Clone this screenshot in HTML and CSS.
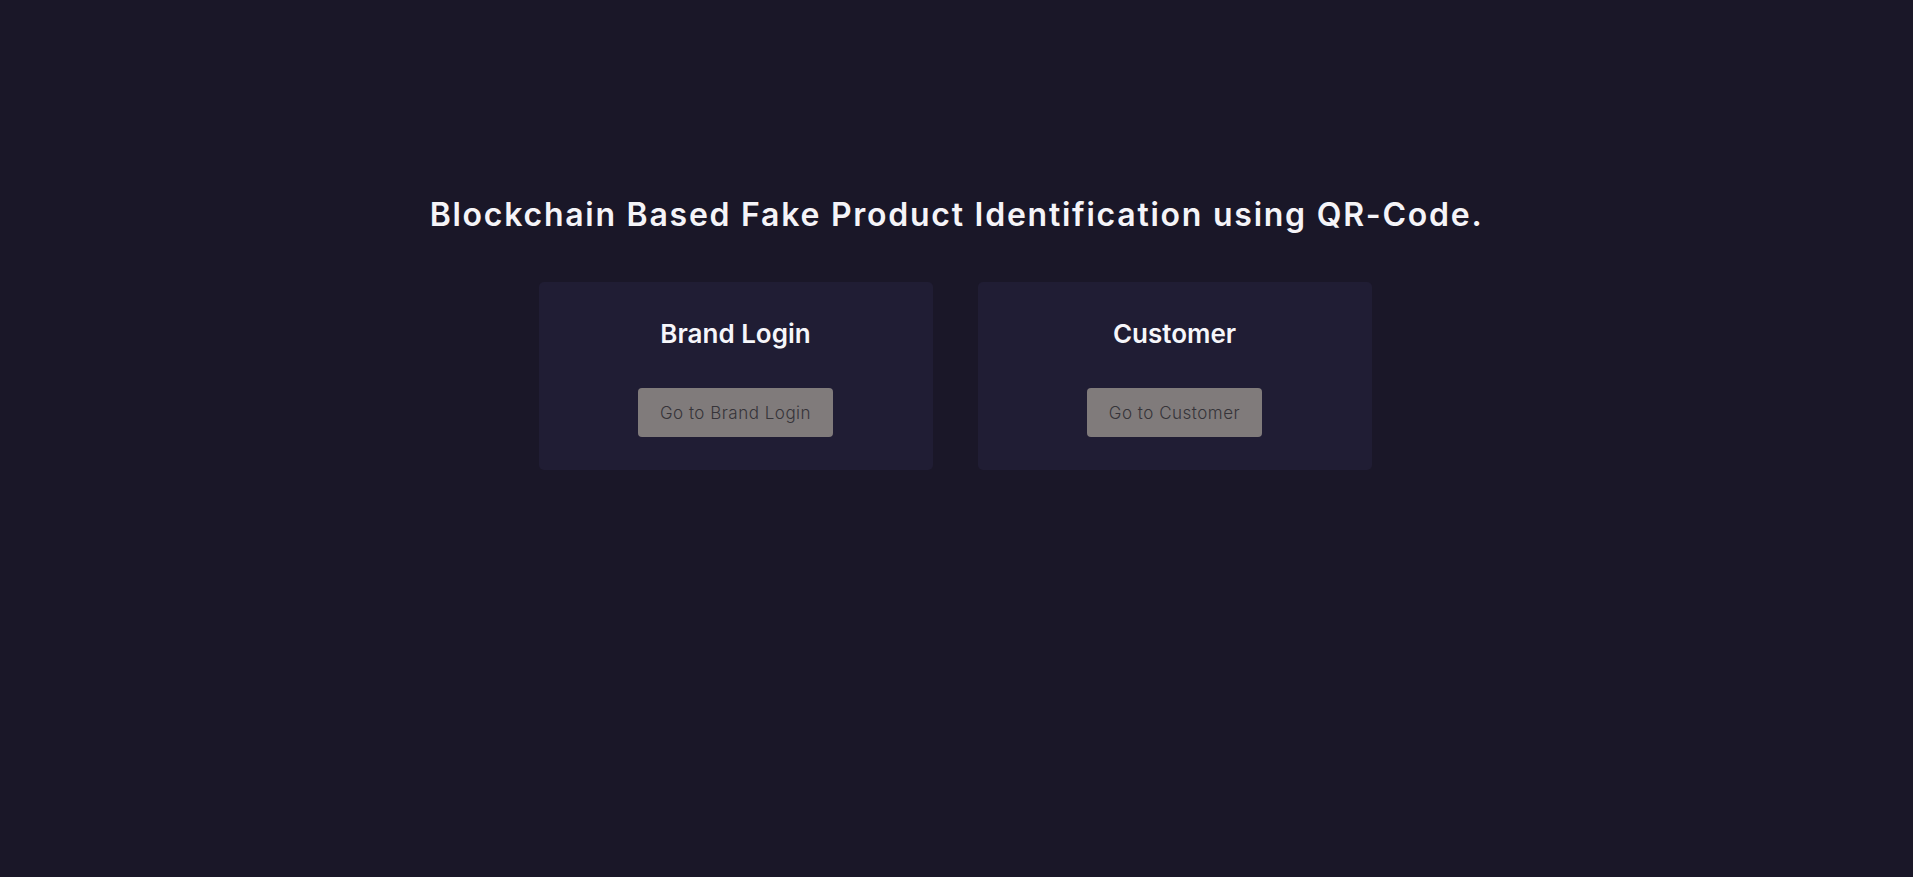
FILE: index.html
```html
<!DOCTYPE html>
<html>
<head>
<meta charset="utf-8">
<link rel="stylesheet" href="styles.css">
</head>
<body>
<main class="page">
  <h1 class="title">Blockchain Based Fake Product Identification using QR-Code.</h1>
  <div class="cards">
    <section class="card">
      <h2 class="card-title">Brand Login</h2>
      <button class="btn">Go to Brand Login</button>
    </section>
    <section class="card">
      <h2 class="card-title">Customer</h2>
      <button class="btn">Go to Customer</button>
    </section>
  </div>
</main>
</body>
</html>
```

FILE: styles.css
```css
html, body {
  margin: 0;
  padding: 0;
  background: #1a1728;
  height: 100%;
}
body {
  font-family: "Inter", "Open Sans", sans-serif;
  color: #f4f4f6;
}
.page {
  display: flex;
  flex-direction: column;
  align-items: center;
  padding-top: 193px;
}
.title {
  margin: 0;
  font-size: 32px;
  font-weight: 600;
  line-height: 44px;
  letter-spacing: 1.75px;
  color: #f5f4f8;
}
.cards {
  display: flex;
  gap: 45px;
  margin-top: 45px;
  margin-right: 3px;
}
.card {
  width: 394px;
  height: 188px;
  box-sizing: border-box;
  background: #201d34;
  border-radius: 5px;
  display: flex;
  flex-direction: column;
  align-items: center;
  padding-top: 34px;
}
.card-title {
  margin: 0;
  font-size: 26px;
  font-weight: 600;
  line-height: 36px;
  color: #f6f6fa;
}
.btn {
  margin-top: 36px;
  height: 49px;
  padding: 0 22px;
  border: none;
  border-radius: 4px;
  background: #807b7b;
  color: #363439;
  font-family: inherit;
  font-size: 17px;
  font-weight: 300;
  letter-spacing: 0.5px;
}
```
